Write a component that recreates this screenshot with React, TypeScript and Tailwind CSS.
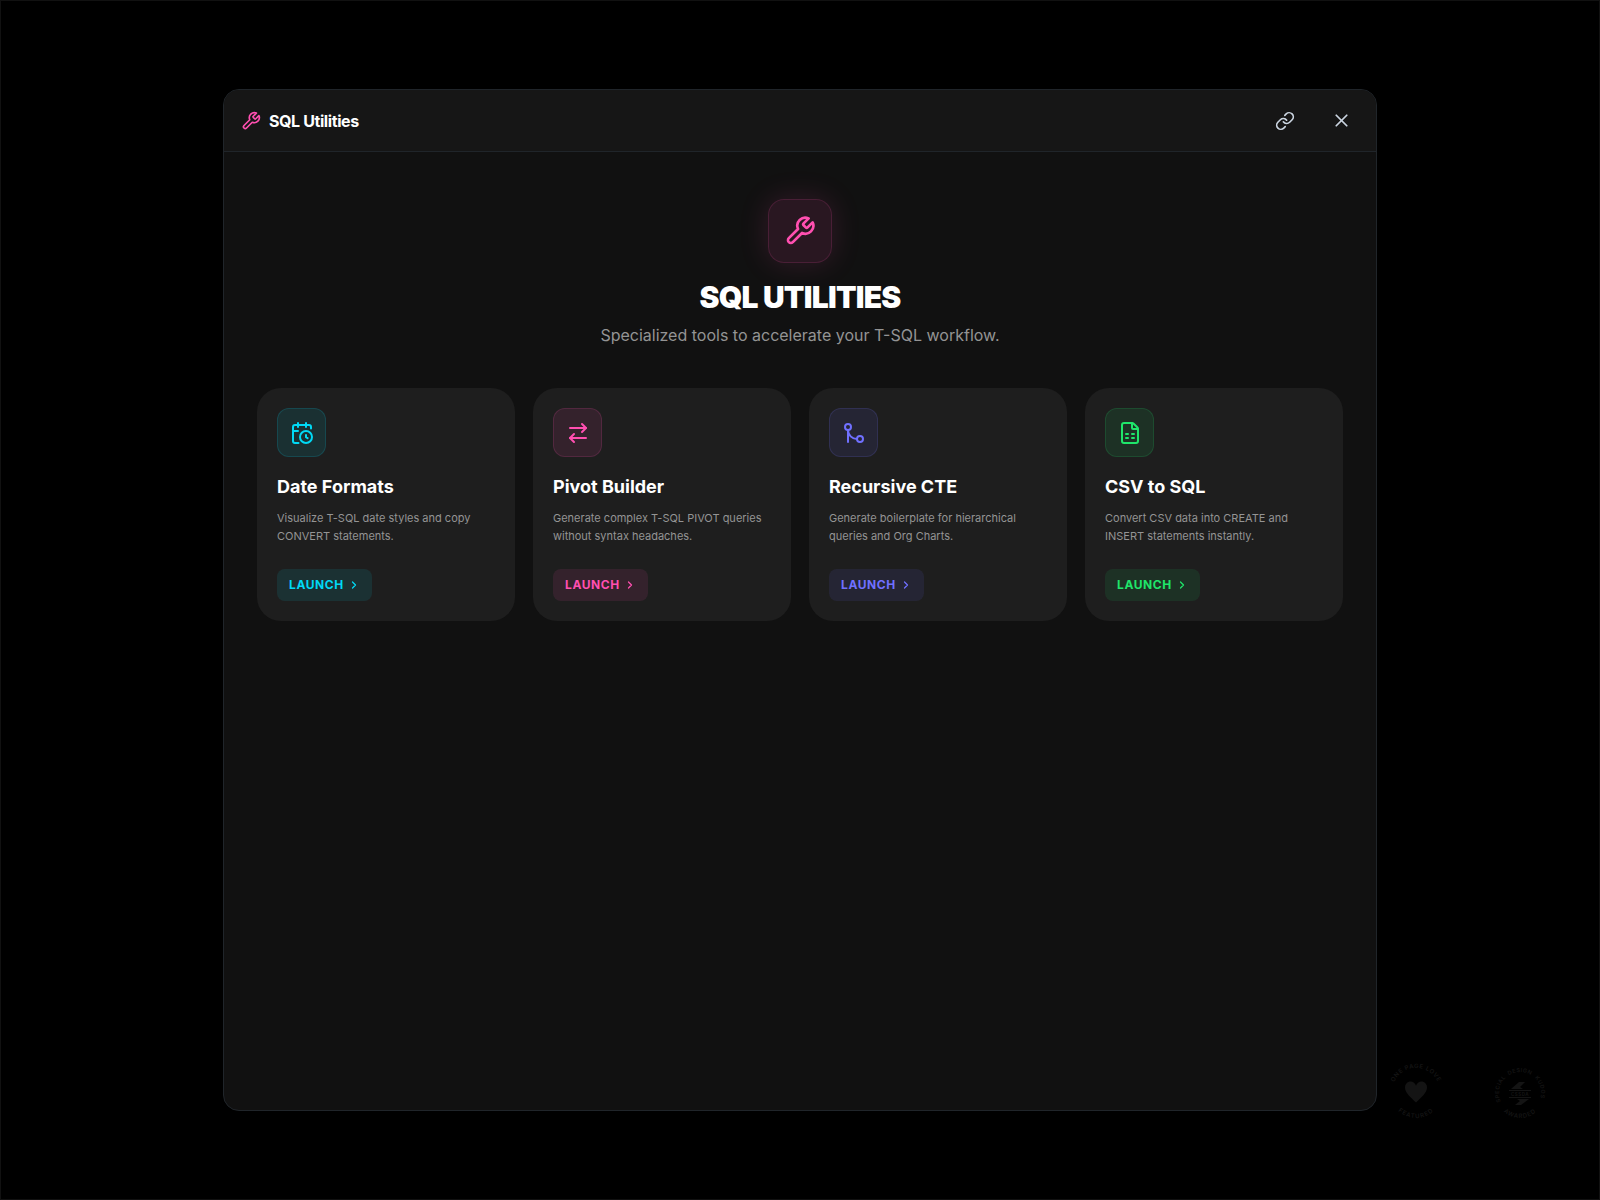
import React from "react";
import { ArrowRightLeft, CalendarClock, ChevronRight, FileSpreadsheet, GitMerge, Link, X } from "lucide-react";
import type { LucideIcon } from "lucide-react";

interface Tool {
    title: string;
    description: string;
    icon: LucideIcon;
    tile: string;
    button: string;
}

const TOOLS: Tool[] = [
    {
        title: "Date Formats",
        description: "Visualize T-SQL date styles and copy CONVERT statements.",
        icon: CalendarClock,
        tile: "text-[#00d9f5] bg-[#00d9f5]/10 border-[#00d9f5]/15",
        button: "text-[#00d9f5] bg-[#00d9f5]/10",
    },
    {
        title: "Pivot Builder",
        description: "Generate complex T-SQL PIVOT queries without syntax headaches.",
        icon: ArrowRightLeft,
        tile: "text-[#ff4fb0] bg-[#ff4fb0]/10 border-[#ff4fb0]/15",
        button: "text-[#ff4fb0] bg-[#ff4fb0]/10",
    },
    {
        title: "Recursive CTE",
        description: "Generate boilerplate for hierarchical queries and Org Charts.",
        icon: GitMerge,
        tile: "text-[#7070ff] bg-[#7070ff]/10 border-[#7070ff]/15",
        button: "text-[#7070ff] bg-[#7070ff]/10",
    },
    {
        title: "CSV to SQL",
        description: "Convert CSV data into CREATE and INSERT statements instantly.",
        icon: FileSpreadsheet,
        tile: "text-[#1fe56a] bg-[#1fe56a]/10 border-[#1fe56a]/15",
        button: "text-[#1fe56a] bg-[#1fe56a]/10",
    },
];

const WrenchIcon: React.FC<{ className?: string }> = ({ className }) => (
    <svg
        viewBox="0 0 24 24"
        fill="none"
        stroke="currentColor"
        strokeWidth="2"
        strokeLinecap="round"
        strokeLinejoin="round"
        className={className}
    >
        <path d="M14.700 6.300a1 1 0 0 0 0 1.400l1.600 1.600a1 1 0 0 0 1.400 0l3.770-3.770a6 6 0 0 1-7.940 7.940l-6.910 6.910a2.120 2.120 0 0 1-3-3l6.910-6.910a6 6 0 0 1 7.940-7.940l-3.760 3.760z" />
    </svg>
);

const ToolCard: React.FC<{ tool: Tool }> = ({ tool }) => {
    const Icon = tool.icon;
    return (
        <article className="flex flex-col items-start rounded-3xl bg-[#1e1e1e] p-5">
            <div className={`flex size-[49px] items-center justify-center rounded-xl border ${tool.tile}`}>
                <Icon className="size-6" strokeWidth={2} />
            </div>
            <h2 className="mt-4 text-lg leading-7 font-bold text-white">{tool.title}</h2>
            <p className="mt-2 mb-6 text-[11px] leading-[18px] text-[#949494]">{tool.description}</p>
            <button className={`mt-auto flex h-8 items-center gap-1 rounded-lg px-3 text-xs font-bold tracking-wider ${tool.button}`}>
                LAUNCH <ChevronRight className="size-3" strokeWidth={2.5} />
            </button>
        </article>
    );
};

const LoveBadge = () => (
    <svg viewBox="0 0 60 60" className="size-15" fill="#141414">
        <path id="love-top" d="M6 30a24 24 0 0 1 48 0" fill="none" />
        <path id="love-bottom" d="M4 30a26 26 0 0 0 52 0" fill="none" />
        <text fontSize="6" fontWeight="600" letterSpacing="0.6" textAnchor="middle">
            <textPath href="#love-top" startOffset="50%">ONE PAGE LOVE</textPath>
        </text>
        <text fontSize="6" fontWeight="600" letterSpacing="1" textAnchor="middle">
            <textPath href="#love-bottom" startOffset="50%">FEATURED</textPath>
        </text>
        <path d="M30 40.500C25 35.500 19 31 19 25.500a5.600 5.600 0 0 1 11-1.800 5.600 5.600 0 0 1 11 1.800C41 31 35 35.500 30 40.500z" />
    </svg>
);

const KudosBadge = () => (
    <svg viewBox="0 0 60 60" className="size-15" fill="#141414">
        <path id="kudos-top" d="M9 31a21 21 0 0 1 42 0" fill="none" />
        <path id="kudos-left" d="M14.500 45.200a21 21 0 0 1 15.500-35.200" fill="none" />
        <path id="kudos-right" d="M30 10a21 21 0 0 1 15.500 35.200" fill="none" />
        <path id="kudos-bottom" d="M5 31a25 25 0 0 0 50 0" fill="none" />
        <g fontSize="5.500" fontWeight="600" letterSpacing="0.500" textAnchor="middle">
            <text>
                <textPath href="#kudos-left" startOffset="41%">SPECIAL</textPath>
            </text>
            <text>
                <textPath href="#kudos-top" startOffset="50%">DESIGN</textPath>
            </text>
            <text>
                <textPath href="#kudos-right" startOffset="56%">KUDOS</textPath>
            </text>
            <text fontSize="6" letterSpacing="0.800">
                <textPath href="#kudos-bottom" startOffset="50%">AWARDED</textPath>
            </text>
        </g>
        <path d="M19 28H41V29H19ZM19 35H41V36H19ZM21 27L29 20H35L30 25L33 27ZM39 37L31 43H25L30 39L27 37Z" />
        <text x="30" y="34" fontSize="4.500" fontWeight="700" letterSpacing="0.500" textAnchor="middle">CSSDA</text>
    </svg>
);

export default function App() {
    return (
        <div className="relative flex h-screen items-center justify-center border border-[#111] bg-black font-['Inter',sans-serif] antialiased">
            <div className="absolute right-[49px] bottom-[77px] flex gap-11">
                <LoveBadge />
                <KudosBadge />
            </div>

            <div
                role="dialog"
                aria-label="SQL Utilities"
                className="relative box-content flex h-[85vh] w-[72vw] flex-col overflow-hidden rounded-2xl border border-[#20252a] bg-[#111]"
            >
                <header className="flex h-[62px] shrink-0 items-center border-b border-[#20252a] bg-[#161616] pr-[19px] pl-[17px]">
                    <WrenchIcon className="size-5 text-[#ff4fb0]" />
                    <span className="ml-2 text-base font-bold tracking-tight text-white">SQL Utilities</span>
                    <button aria-label="Copy link" className="ml-auto flex size-8 items-center justify-center text-[#cbd5e1]">
                        <Link className="size-5" strokeWidth={2} />
                    </button>
                    <button aria-label="Close" className="ml-6 flex size-8 items-center justify-center text-[#cbd5e1]">
                        <X className="size-[21px]" strokeWidth={2} />
                    </button>
                </header>

                <main className="flex-1 px-[33px] pt-[47px]">
                    <div className="mb-[39px] flex flex-col items-center">
                        <div className="flex size-16 items-center justify-center rounded-2xl border border-[#ff4fb0]/15 bg-[#ff4fb0]/10 text-[#ff4fb0] shadow-[0_0_30px_rgba(255,79,176,0.15)]">
                            <WrenchIcon className="size-8" />
                        </div>
                        <h1 className="mt-4 text-3xl leading-9 font-black tracking-tight text-white">SQL UTILITIES</h1>
                        <p className="mt-1.5 text-base leading-7 text-[#949494]">Specialized tools to accelerate your T-SQL workflow.</p>
                    </div>

                    <div className="grid grid-cols-4 gap-[18px]">
                        {TOOLS.map((tool) => (
                            <ToolCard key={tool.title} tool={tool} />
                        ))}
                    </div>
                </main>
            </div>
        </div>
    );
}
